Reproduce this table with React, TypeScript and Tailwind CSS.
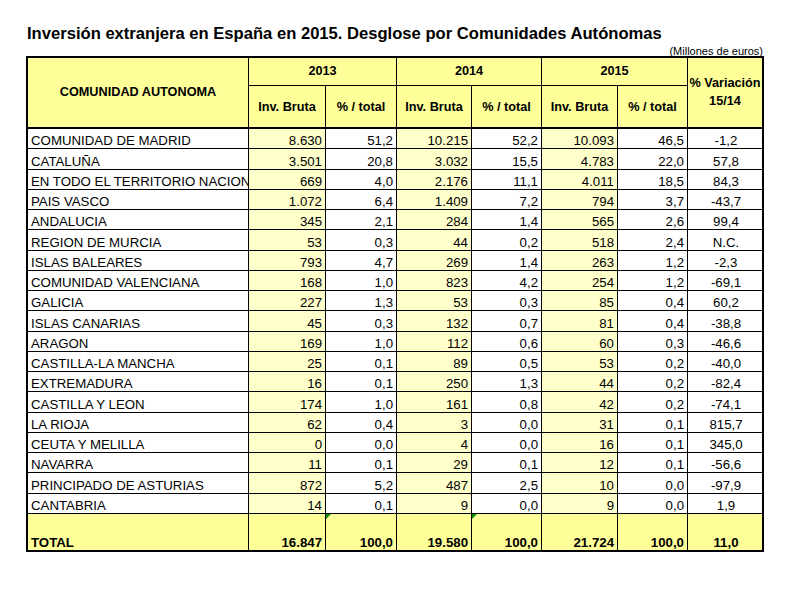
type Row = {
  name: string;
  a: string;
  ap: string;
  b: string;
  bp: string;
  c: string;
  cp: string;
  v: string;
};

const rows: Row[] = [
  { name: "COMUNIDAD DE MADRID", a: "8.630", ap: "51,2", b: "10.215", bp: "52,2", c: "10.093", cp: "46,5", v: "-1,2" },
  { name: "CATALUÑA", a: "3.501", ap: "20,8", b: "3.032", bp: "15,5", c: "4.783", cp: "22,0", v: "57,8" },
  { name: "EN TODO EL TERRITORIO NACIONAL", a: "669", ap: "4,0", b: "2.176", bp: "11,1", c: "4.011", cp: "18,5", v: "84,3" },
  { name: "PAIS VASCO", a: "1.072", ap: "6,4", b: "1.409", bp: "7,2", c: "794", cp: "3,7", v: "-43,7" },
  { name: "ANDALUCIA", a: "345", ap: "2,1", b: "284", bp: "1,4", c: "565", cp: "2,6", v: "99,4" },
  { name: "REGION DE MURCIA", a: "53", ap: "0,3", b: "44", bp: "0,2", c: "518", cp: "2,4", v: "N.C." },
  { name: "ISLAS BALEARES", a: "793", ap: "4,7", b: "269", bp: "1,4", c: "263", cp: "1,2", v: "-2,3" },
  { name: "COMUNIDAD VALENCIANA", a: "168", ap: "1,0", b: "823", bp: "4,2", c: "254", cp: "1,2", v: "-69,1" },
  { name: "GALICIA", a: "227", ap: "1,3", b: "53", bp: "0,3", c: "85", cp: "0,4", v: "60,2" },
  { name: "ISLAS CANARIAS", a: "45", ap: "0,3", b: "132", bp: "0,7", c: "81", cp: "0,4", v: "-38,8" },
  { name: "ARAGON", a: "169", ap: "1,0", b: "112", bp: "0,6", c: "60", cp: "0,3", v: "-46,6" },
  { name: "CASTILLA-LA MANCHA", a: "25", ap: "0,1", b: "89", bp: "0,5", c: "53", cp: "0,2", v: "-40,0" },
  { name: "EXTREMADURA", a: "16", ap: "0,1", b: "250", bp: "1,3", c: "44", cp: "0,2", v: "-82,4" },
  { name: "CASTILLA Y LEON", a: "174", ap: "1,0", b: "161", bp: "0,8", c: "42", cp: "0,2", v: "-74,1" },
  { name: "LA RIOJA", a: "62", ap: "0,4", b: "3", bp: "0,0", c: "31", cp: "0,1", v: "815,7" },
  { name: "CEUTA Y MELILLA", a: "0", ap: "0,0", b: "4", bp: "0,0", c: "16", cp: "0,1", v: "345,0" },
  { name: "NAVARRA", a: "11", ap: "0,1", b: "29", bp: "0,1", c: "12", cp: "0,1", v: "-56,6" },
  { name: "PRINCIPADO DE ASTURIAS", a: "872", ap: "5,2", b: "487", bp: "2,5", c: "10", cp: "0,0", v: "-97,9" },
  { name: "CANTABRIA", a: "14", ap: "0,1", b: "9", bp: "0,0", c: "9", cp: "0,0", v: "1,9" },
];

const head = "bg-[#ffff99] border-black flex items-center justify-center text-center font-bold text-[12.7px]";
const cell = "h-[20.25px] border-black border-b flex items-end text-[13.25px] leading-[15px] whitespace-nowrap overflow-hidden";
const num = cell + " border-r justify-end pr-[3px]";
const tot = "bg-[#ffff99] border-black flex items-end font-bold text-[13.25px] leading-[15px]";

function Flag() {
  return (
    <span className="absolute left-0 top-0 w-0 h-0 border-t-[5px] border-t-[#0a8a0a] border-r-[5px] border-r-transparent" />
  );
}

export default function App() {
  return (
    <div className="min-h-screen bg-white text-black font-['Liberation_Sans',Arial,sans-serif]">
      <div className="ml-[26px] w-[738px] pt-[25px]">
        <h1 className="h-[21px] pl-[1px] text-[16.6px] leading-[18px] font-bold whitespace-nowrap">
          Inversión extranjera en España en 2015. Desglose por Comunidades Autónomas
        </h1>
        <p className="h-[10px] pr-[1px] text-right text-[11px] leading-[10px]">(Millones de euros)</p>

        <div className="grid grid-cols-[221px_77px_71px_75px_70px_76px_70px_74px] grid-rows-[28px_43px] border-2 border-black">
          <div className={head + " row-span-2 border-r border-b-2"}>COMUNIDAD AUTONOMA</div>
          <div className={head + " col-span-2 border-r border-b"}>2013</div>
          <div className={head + " col-span-2 border-r border-b"}>2014</div>
          <div className={head + " col-span-2 border-r border-b"}>2015</div>
          <div className={head + " row-span-2 border-b-2 leading-[18px] pb-[2px]"}>
            % Variación
            <br />
            15/14
          </div>
          <div className={head + " border-r border-b-2 pt-[3px]"}>Inv. Bruta</div>
          <div className={head + " border-r border-b-2 pt-[3px]"}>% / total</div>
          <div className={head + " border-r border-b-2 pt-[3px]"}>Inv. Bruta</div>
          <div className={head + " border-r border-b-2 pt-[3px]"}>% / total</div>
          <div className={head + " border-r border-b-2 pt-[3px]"}>Inv. Bruta</div>
          <div className={head + " border-r border-b-2 pt-[3px]"}>% / total</div>

          {rows.map((r) => (
            <div key={r.name} className="contents">
              <div className={cell + " border-r pl-[3px]"}>{r.name}</div>
              <div className={num + " bg-[#ffffcc]"}>{r.a}</div>
              <div className={num}>{r.ap}</div>
              <div className={num + " bg-[#ffffcc]"}>{r.b}</div>
              <div className={num}>{r.bp}</div>
              <div className={num + " bg-[#ffffcc]"}>{r.c}</div>
              <div className={num}>{r.cp}</div>
              <div className={cell + " justify-center pl-[2px]"}>{r.v}</div>
            </div>
          ))}

          <div className={tot + " h-[36px] border-r pl-[3px]"}>TOTAL</div>
          <div className={tot + " border-r justify-end pr-[3px]"}>16.847</div>
          <div className={tot + " relative border-r justify-end pr-[3px]"}>
            <Flag />
            100,0
          </div>
          <div className={tot + " border-r justify-end pr-[3px]"}>19.580</div>
          <div className={tot + " relative border-r justify-end pr-[3px]"}>
            <Flag />
            100,0
          </div>
          <div className={tot + " border-r justify-end pr-[3px]"}>21.724</div>
          <div className={tot + " border-r justify-end pr-[3px]"}>100,0</div>
          <div className={tot + " justify-center pl-[2px]"}>11,0</div>
        </div>
      </div>
    </div>
  );
}
